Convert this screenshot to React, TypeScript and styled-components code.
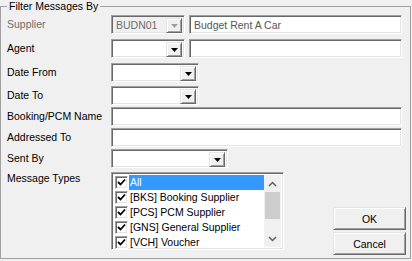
import React from "react";
import styled, { createGlobalStyle, css } from "styled-components";

const GlobalStyle = createGlobalStyle`
  html, body {
    margin: 0;
    padding: 0;
    background: #f0f0f0;
  }
  body {
    font-family: "Liberation Sans", Arial, sans-serif;
    font-size: 10.5px;
    color: #000;
  }
`;

const sunken = css`
  box-sizing: border-box;
  border: 1px solid;
  border-color: #a0a0a0 #ffffff #ffffff #a0a0a0;
  box-shadow: inset 1px 1px 0 #696969, inset -1px -1px 0 #e3e3e3;
`;

const raised = css`
  box-sizing: border-box;
  border: 1px solid;
  border-color: #e3e3e3 #696969 #696969 #e3e3e3;
  box-shadow: inset 1px 1px 0 #ffffff, inset -1px -1px 0 #a0a0a0;
  background: #f0f0f0;
`;

const Window = styled.div`
  width: 412px;
  height: 261px;
  padding-top: 6px;
  box-sizing: border-box;
`;

const Frame = styled.div`
  position: relative;
  box-sizing: border-box;
  width: 411px;
  height: 253px;
  border: 1px solid #a0a0a0;
  padding: 8px 4px 0 6px;
`;

const Caption = styled.span`
  position: absolute;
  top: -7px;
  left: 6px;
  padding: 0 2px;
  background: #f0f0f0;
  line-height: 13px;
`;

const Row = styled.div<{ $mt: number; $h: number; $top?: boolean }>`
  display: flex;
  align-items: ${(p) => (p.$top ? "flex-start" : "center")};
  margin-top: ${(p) => p.$mt}px;
  height: ${(p) => p.$h}px;
`;

const Label = styled.div<{ $disabled?: boolean }>`
  width: 104px;
  flex: none;
  line-height: 13px;
  color: ${(p) => (p.$disabled ? "#6d6d6d" : "#000")};
`;

const Controls = styled.div`
  display: flex;
  gap: 4px;
  height: 100%;
  flex: 1;
`;

const Combo = styled.div<{ $w: number; $disabled?: boolean }>`
  ${sunken};
  display: flex;
  width: ${(p) => p.$w}px;
  height: 19px;
  padding: 2px;
  background: ${(p) => (p.$disabled ? "#f0f0f0" : "#ffffff")};
  color: ${(p) => (p.$disabled ? "#6d6d6d" : "#000")};
`;

const ComboText = styled.div`
  flex: 1;
  padding-left: 2px;
  line-height: 15px;
  overflow: hidden;
`;

const DropButton = styled.div`
  ${raised};
  width: 16px;
  height: 15px;
  display: flex;
  align-items: center;
  justify-content: center;
`;

const Edit = styled.div<{ $w: number; $muted?: boolean }>`
  ${sunken};
  width: ${(p) => p.$w}px;
  height: 19px;
  padding: 2px 4px;
  line-height: 15px;
  background: #ffffff;
  color: ${(p) => (p.$muted ? "#555555" : "#000")};
`;

const LastArea = styled.div`
  display: flex;
  flex: 1;
  height: 100%;
`;

const ListBox = styled.div`
  ${sunken};
  width: 173px;
  height: 78px;
  padding: 2px;
  background: #ffffff;
  display: flex;
`;

const Items = styled.div`
  flex: 1;
  display: flex;
  flex-direction: column;
`;

const Item = styled.div`
  display: flex;
  align-items: center;
  height: 15px;
`;

const Check = styled.div`
  ${sunken};
  width: 13px;
  height: 13px;
  margin: 0 1px;
  background: #ffffff;
  display: flex;
  align-items: center;
  justify-content: center;
  flex: none;
`;

const ItemText = styled.div<{ $selected?: boolean }>`
  flex: 1;
  height: 15px;
  line-height: 15px;
  padding-left: 1px;
  white-space: nowrap;
  background: ${(p) => (p.$selected ? "#3399ff" : "transparent")};
  color: ${(p) => (p.$selected ? "#ffffff" : "#000")};
`;

const ScrollBar = styled.div`
  width: 17px;
  flex: none;
  background: #f0f0f0;
  display: flex;
  flex-direction: column;
`;

const ScrollArrow = styled.div`
  height: 17px;
  display: flex;
  align-items: center;
  justify-content: center;
`;

const Track = styled.div`
  flex: 1;
  display: flex;
  flex-direction: column;
  padding: 0 1px;
`;

const Thumb = styled.div`
  height: 27px;
  background: #cdcdcd;
`;

const Spacer = styled.div`
  flex: 1;
`;

const Buttons = styled.div`
  display: flex;
  flex-direction: column;
  gap: 2px;
  align-self: flex-end;
`;

const Button = styled.button`
  ${raised};
  width: 73px;
  height: 23px;
  padding: 0;
  font: inherit;
  color: #000;
`;

const Arrow = ({ color = "#000" }: { color?: string }) => (
  <svg width="7" height="4" viewBox="0 0 7 4">
    <path d="M0 0H7L3.5 4Z" fill={color} />
  </svg>
);

const Tick = () => (
  <svg width="9" height="9" viewBox="0 0 9 9">
    <path d="M1 4L3.5 6.5L8 1.5" stroke="#000" strokeWidth="1.8" fill="none" />
  </svg>
);

const Chevron = ({ up }: { up?: boolean }) => (
  <svg width="9" height="6" viewBox="0 0 9 6">
    <path
      d={up ? "M1 5L4.5 1.5L8 5" : "M1 1L4.5 4.5L8 1"}
      stroke="#606060"
      strokeWidth="1.5"
      fill="none"
    />
  </svg>
);

const messageTypes = [
  "All",
  "[BKS] Booking Supplier",
  "[PCS] PCM Supplier",
  "[GNS] General Supplier",
  "[VCH] Voucher",
];

export default function App() {
  return (
    <>
      <GlobalStyle />
      <Window>
        <Frame>
          <Caption>Filter Messages By</Caption>

          <Row $mt={0} $h={19}>
            <Label $disabled>Supplier</Label>
            <Controls>
              <Combo $w={74} $disabled>
                <ComboText>BUDN01</ComboText>
                <DropButton>
                  <Arrow color="#a0a0a0" />
                </DropButton>
              </Combo>
              <Edit $w={213} $muted>Budget Rent A Car</Edit>
            </Controls>
          </Row>

          <Row $mt={5} $h={19}>
            <Label>Agent</Label>
            <Controls>
              <Combo $w={74}>
                <ComboText />
                <DropButton>
                  <Arrow />
                </DropButton>
              </Combo>
              <Edit $w={213} />
            </Controls>
          </Row>

          <Row $mt={5} $h={19}>
            <Label>Date From</Label>
            <Controls>
              <Combo $w={88}>
                <ComboText />
                <DropButton>
                  <Arrow />
                </DropButton>
              </Combo>
            </Controls>
          </Row>

          <Row $mt={4} $h={19}>
            <Label>Date To</Label>
            <Controls>
              <Combo $w={88}>
                <ComboText />
                <DropButton>
                  <Arrow />
                </DropButton>
              </Combo>
            </Controls>
          </Row>

          <Row $mt={2} $h={19}>
            <Label>Booking/PCM Name</Label>
            <Controls>
              <Edit $w={291} />
            </Controls>
          </Row>

          <Row $mt={2} $h={19}>
            <Label>Addressed To</Label>
            <Controls>
              <Edit $w={291} />
            </Controls>
          </Row>

          <Row $mt={2} $h={19}>
            <Label>Sent By</Label>
            <Controls>
              <Combo $w={117}>
                <ComboText />
                <DropButton>
                  <Arrow />
                </DropButton>
              </Combo>
            </Controls>
          </Row>

          <Row $mt={4} $h={83} $top>
            <Label>Message Types</Label>
            <LastArea>
              <ListBox>
                <Items>
                  {messageTypes.map((t, i) => (
                    <Item key={t}>
                      <Check>
                        <Tick />
                      </Check>
                      <ItemText $selected={i === 0}>{t}</ItemText>
                    </Item>
                  ))}
                </Items>
                <ScrollBar>
                  <ScrollArrow>
                    <Chevron up />
                  </ScrollArrow>
                  <Track>
                    <Thumb />
                  </Track>
                  <ScrollArrow>
                    <Chevron />
                  </ScrollArrow>
                </ScrollBar>
              </ListBox>
              <Spacer />
              <Buttons>
                <Button>OK</Button>
                <Button>Cancel</Button>
              </Buttons>
            </LastArea>
          </Row>
        </Frame>
      </Window>
    </>
  );
}
